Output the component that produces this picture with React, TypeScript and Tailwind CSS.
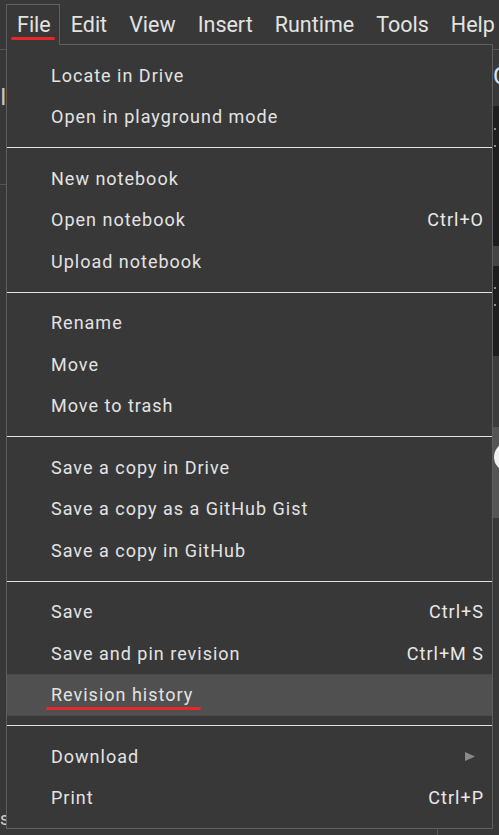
import React from "react";

type Item = { label: string; shortcut?: string; submenu?: boolean; active?: boolean };

const sections: Item[][] = [
  [{ label: "Locate in Drive" }, { label: "Open in playground mode" }],
  [
    { label: "New notebook" },
    { label: "Open notebook", shortcut: "Ctrl+O" },
    { label: "Upload notebook" },
  ],
  [{ label: "Rename" }, { label: "Move" }, { label: "Move to trash" }],
  [
    { label: "Save a copy in Drive" },
    { label: "Save a copy as a GitHub Gist" },
    { label: "Save a copy in GitHub" },
  ],
  [
    { label: "Save", shortcut: "Ctrl+S" },
    { label: "Save and pin revision", shortcut: "Ctrl+M S" },
    { label: "Revision history", active: true },
  ],
  [{ label: "Download", submenu: true }, { label: "Print", shortcut: "Ctrl+P" }],
];

const menus = ["Edit", "View", "Insert", "Runtime", "Tools", "Help"];

function MenuRow({ item }: { item: Item }) {
  return (
    <div
      className={
        item.active
          ? "relative flex h-[41.5px] items-center border-y border-dotted border-[#444] bg-[#505050] pl-[44px] pr-[8px]"
          : "relative flex h-[41.5px] items-center pl-[44px] pr-[8px]"
      }
    >
      <span>{item.label}</span>
      {item.shortcut && <span className="ml-auto text-[#e8e8e8]">{item.shortcut}</span>}
      {item.submenu && (
        <svg className="ml-auto mr-[9px]" width="10" height="9" viewBox="0 0 10 9">
          <path d="M0 0 L10 4.5 L0 9 Z" fill="#8a8a8a" />
        </svg>
      )}
      {item.active && (
        <div className="absolute bottom-[5px] left-[39px] h-[3px] w-[155px] rounded-full bg-[#e8262b]" />
      )}
    </div>
  );
}

export default function App() {
  return (
    <div className="relative h-[835px] w-[499px] overflow-hidden bg-[#383838] font-['Roboto',sans-serif]">
      {/* menu bar */}
      <div className="flex h-[50px] items-start whitespace-nowrap border-b border-[#555] pl-[6px] pt-[4px] text-[21.5px] text-[#e3e3e3]">
        <div className="relative z-20 flex h-[41px] items-center border-x border-t border-[#5f5f5f] bg-[#383838] pl-[10px] pr-[8px]">
          File
          <div className="absolute left-[4px] top-[32px] h-[3px] w-[44px] rounded-full bg-[#e8262b]" />
        </div>
        {menus.map((m) => (
          <div key={m} className="flex h-[41px] items-center px-[11px] pt-[1px]">
            {m}
          </div>
        ))}
      </div>

      {/* page behind the menu */}
      <div className="flex h-[785px]">
        <div className="flex w-[438px] shrink-0 flex-col border-r border-[#555]">
          <div className="h-[135px] border-b border-[#555] pt-[33px] text-[24px] leading-[28px] text-[#c4c4c4]">
            I
          </div>
          <div className="flex-1" />
          <div className="pb-[6px] text-[18px] leading-[21px] text-[#d0d0d0]">s</div>
        </div>
        <div className="flex min-w-0 flex-1 flex-col overflow-hidden">
          <div className="h-[56px] whitespace-nowrap pl-[55px] pt-[12px] text-[24px] leading-[28px] text-[#d6e4f5]">
            Connect
          </div>
          <div className="flex h-[140px] flex-col gap-[15px] bg-[#1e1e1e] pl-[56px] pt-[22px]">
            <div className="h-[2px] w-[2px] bg-[#8a8a8a]" />
            <div className="h-[2px] w-[2px] bg-[#8a8a8a]" />
          </div>
          <div className="h-[20px] bg-[#444]" />
          <div className="flex h-[90px] flex-col gap-[15px] bg-[#1e1e1e] pl-[56px] pt-[21px]">
            <div className="h-[2px] w-[2px] bg-[#8a8a8a]" />
            <div className="h-[2px] w-[2px] bg-[#8a8a8a]" />
          </div>
          <div className="h-[71px] bg-[#3c3c3c]" />
          <div className="h-[91px] bg-[#555] pl-[56px] pt-[15px]">
            <div className="h-[30px] w-[30px] shrink-0 rounded-full bg-[#f0f0f0]" />
          </div>
          <div className="flex-1" />
        </div>
      </div>

      {/* File dropdown */}
      <div className="absolute left-[6px] top-[44px] z-10 w-[487px] border border-[#5f5f5f] bg-[#383838] text-[18px] tracking-[1px] text-[#e3e3e3]">
        {sections.map((sec, i) => (
          <div key={i} className={i > 0 ? "border-t border-[#e0e0e0] py-[9.5px]" : "py-[9.5px]"}>
            {sec.map((item) => (
              <MenuRow key={item.label} item={item} />
            ))}
          </div>
        ))}
      </div>
    </div>
  );
}
